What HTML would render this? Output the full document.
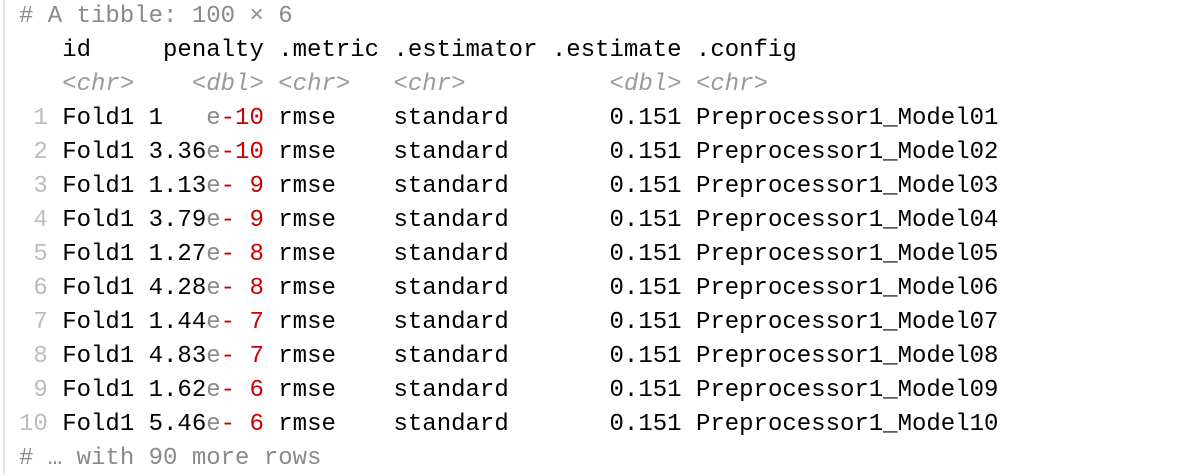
<!DOCTYPE html>
<html><head><style>
html,body{margin:0;padding:0;background:#fff;width:1200px;height:474px;overflow:hidden}
.bar{position:absolute;left:3px;top:0;width:2px;height:474px;background:#e6e6e6}
pre{position:absolute;left:19px;top:0px;margin:0;font-family:"Liberation Mono",monospace;font-size:24px;line-height:34px;color:#000}
.g{color:#8a8a8a}.n{color:#bcbcbc}.t{color:#9a9a9a;font-style:italic}.r{color:#cc0000}
</style></head><body><div class="bar"></div>
<pre><span class="g"># A tibble: 100 × 6</span>
   id     penalty .metric .estimator .estimate .config              
   <span class="t">&lt;chr&gt;</span>    <span class="t">&lt;dbl&gt;</span> <span class="t">&lt;chr&gt;</span>   <span class="t">&lt;chr&gt;</span>          <span class="t">&lt;dbl&gt;</span> <span class="t">&lt;chr&gt;</span>
<span class="n"> 1</span> Fold1 1   <span class="g">e</span><span class="r">-10</span> rmse    standard       0.151 Preprocessor1_Model01
<span class="n"> 2</span> Fold1 3.36<span class="g">e</span><span class="r">-10</span> rmse    standard       0.151 Preprocessor1_Model02
<span class="n"> 3</span> Fold1 1.13<span class="g">e</span><span class="r">- 9</span> rmse    standard       0.151 Preprocessor1_Model03
<span class="n"> 4</span> Fold1 3.79<span class="g">e</span><span class="r">- 9</span> rmse    standard       0.151 Preprocessor1_Model04
<span class="n"> 5</span> Fold1 1.27<span class="g">e</span><span class="r">- 8</span> rmse    standard       0.151 Preprocessor1_Model05
<span class="n"> 6</span> Fold1 4.28<span class="g">e</span><span class="r">- 8</span> rmse    standard       0.151 Preprocessor1_Model06
<span class="n"> 7</span> Fold1 1.44<span class="g">e</span><span class="r">- 7</span> rmse    standard       0.151 Preprocessor1_Model07
<span class="n"> 8</span> Fold1 4.83<span class="g">e</span><span class="r">- 7</span> rmse    standard       0.151 Preprocessor1_Model08
<span class="n"> 9</span> Fold1 1.62<span class="g">e</span><span class="r">- 6</span> rmse    standard       0.151 Preprocessor1_Model09
<span class="n">10</span> Fold1 5.46<span class="g">e</span><span class="r">- 6</span> rmse    standard       0.151 Preprocessor1_Model10
<span class="g"># … with 90 more rows</span></pre>
</body></html>
